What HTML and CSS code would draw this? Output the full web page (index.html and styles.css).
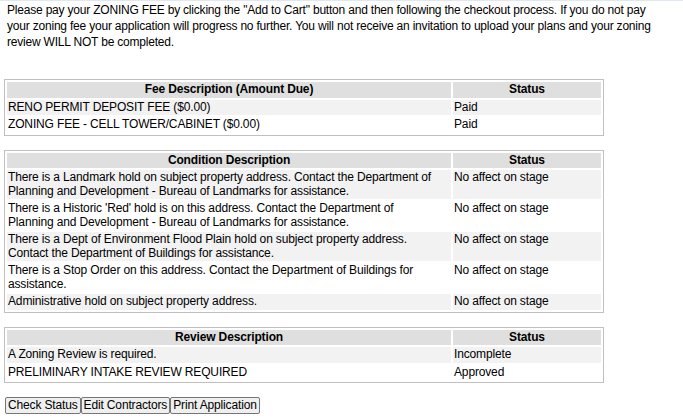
FILE: index.html
```html
<!DOCTYPE html>
<html lang="en">
<head>
    <meta charset="UTF-8">
    <title>Application Status</title>
    <link rel="stylesheet" href="styles.css">
</head>
<body>
    <p class="notice">Please pay your ZONING FEE by clicking the "Add to Cart" button and then following the checkout process. If you do not pay your zoning fee your application will progress no further. You will not receive an invitation to upload your plans and your zoning review WILL NOT be completed.</p>

    <table class="grid">
        <tr>
            <th class="desc">Fee Description (Amount Due)</th>
            <th class="status">Status</th>
        </tr>
        <tr class="alt">
            <td>RENO PERMIT DEPOSIT FEE ($0.00)</td>
            <td>Paid</td>
        </tr>
        <tr>
            <td>ZONING FEE - CELL TOWER/CABINET ($0.00)</td>
            <td>Paid</td>
        </tr>
    </table>

    <table class="grid">
        <tr>
            <th class="desc">Condition Description</th>
            <th class="status">Status</th>
        </tr>
        <tr class="alt">
            <td>There is a Landmark hold on subject property address. Contact the Department of Planning and Development - Bureau of Landmarks for assistance.</td>
            <td>No affect on stage</td>
        </tr>
        <tr>
            <td>There is a Historic 'Red' hold is on this address. Contact the Department of<br>Planning and Development - Bureau of Landmarks for assistance.</td>
            <td>No affect on stage</td>
        </tr>
        <tr class="alt">
            <td>There is a Dept of Environment Flood Plain hold on subject property address. Contact the Department of Buildings for assistance.</td>
            <td>No affect on stage</td>
        </tr>
        <tr>
            <td>There is a Stop Order on this address. Contact the Department of Buildings for assistance.</td>
            <td>No affect on stage</td>
        </tr>
        <tr class="alt">
            <td>Administrative hold on subject property address.</td>
            <td>No affect on stage</td>
        </tr>
    </table>

    <table class="grid">
        <tr>
            <th class="desc">Review Description</th>
            <th class="status">Status</th>
        </tr>
        <tr class="alt">
            <td>A Zoning Review is required.</td>
            <td>Incomplete</td>
        </tr>
        <tr>
            <td>PRELIMINARY INTAKE REVIEW REQUIRED</td>
            <td>Approved</td>
        </tr>
    </table>

    <div class="actions">
        <button type="button" class="btn">Check Status</button>
        <button type="button" class="btn">Edit Contractors</button>
        <button type="button" class="btn">Print Application</button>
    </div>
</body>
</html>
```

FILE: styles.css
```css
* {
    box-sizing: border-box;
}

body {
    margin: 0;
    padding: 0 4px;
    border-top: 1px solid #dde8f3;
    font-family: "Liberation Sans", Arial, sans-serif;
    font-size: 12px;
    color: #000;
    background: #fff;
}

.notice {
    margin: 1px 12px 29px 3px;
    line-height: 16px;
    letter-spacing: -0.2px;
}

.grid {
    width: 600px;
    border: 1px solid #c0c0c0;
    border-spacing: 2px;
    margin-bottom: 14px;
    letter-spacing: -0.15px;
}

.grid th,
.grid td {
    padding: 1px 1px;
    line-height: 13.5px;
    vertical-align: top;
    text-align: left;
    font-weight: normal;
}

.grid th {
    background: #dfdfdf;
    font-weight: bold;
    text-align: center;
}

.grid .status {
    width: 148px;
}

.grid .alt td {
    background: #f2f2f2;
}

.actions {
    display: flex;
    padding-left: 1px;
}

.btn {
    font-family: "Liberation Sans", Arial, sans-serif;
    font-size: 12px;
    letter-spacing: -0.15px;
    color: #000;
    background: #efefef;
    border: 1px solid #767676;
    border-radius: 2px;
    padding: 1px 2px;
    line-height: 13px;
    margin: 0;
}
```
